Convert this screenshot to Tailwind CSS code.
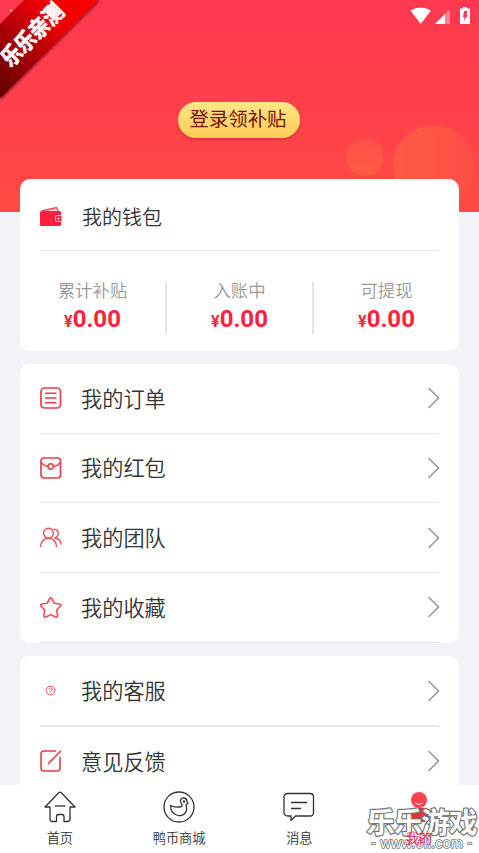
<!DOCTYPE html>
<html lang="zh-CN">
<head>
<meta charset="utf-8">
<title>我的</title>
<script src="https://cdn.jsdelivr.net/npm/@tailwindcss/browser@4"></script>
</head>
<body class="w-[479px] h-[853px] overflow-hidden bg-[#f2f3f8] text-[#333] font-[Roboto,'Noto_Sans_CJK_SC',sans-serif] font-[350]">
<div class="relative w-[479px] h-[853px] overflow-hidden flex flex-col">
  <!-- header background -->
  <div class="absolute inset-x-0 top-0 h-[212px] overflow-hidden bg-linear-to-b from-[#ff3850] via-[#ff404b] to-[#ff4b43]">
    <div class="absolute left-[346px] top-[138px] size-[38px] rounded-full bg-linear-to-b from-[#ff504b] to-[#ff5a44]"></div>
    <div class="absolute left-[393px] top-[125px] size-[81px] rounded-full bg-linear-to-r from-[#ff5947] to-[#ff4e46]"></div>
    <svg class="absolute left-0 top-0" width="110" height="110" viewBox="0 0 110 110">
      <defs>
        <linearGradient id="rib" x1="0" y1="100" x2="100" y2="0" gradientUnits="userSpaceOnUse"><stop offset="0" stop-color="#5c0000"/><stop offset=".3" stop-color="#980005"/><stop offset=".65" stop-color="#e90005"/><stop offset="1" stop-color="#ff0000"/></linearGradient>
        <filter id="sh"><feGaussianBlur stdDeviation="1.5"/></filter>
      </defs>
      <path d="M0 100 L100 0 H92 L0 92Z" fill="#70101c" filter="url(#sh)"/>
      <path d="M0 24 L24 0 H99 L0 98Z" fill="url(#rib)"/>
      <circle cx="11" cy="10.500" r="1" fill="#fff"/>
      <text x="0" y="0" transform="translate(10.500 68) rotate(-45)" textLength="78" lengthAdjust="spacingAndGlyphs" font-family="Noto Sans CJK SC" font-weight="700" font-size="22.500" fill="#fff" stroke="#fff" stroke-width=".8">乐乐亲测</text>
    </svg>
  </div>
  <!-- status bar -->
  <div class="relative h-[30px] shrink-0">
    <svg class="absolute left-[410px] top-[6px]" width="62" height="19" viewBox="0 0 62 19">
      <path d="M.5 4.500Q10.500-1.500 21 4.500L10.700 18Z" fill="#fff"/>
      <path d="M25 18L40 3V18Z" fill="#ff8090"/><path d="M25 18L35 8V18Z" fill="#fff"/>
      <path d="M50 2.500H53V1H57V2.500H60V18H50Z" fill="#fff"/>
      <path d="M54 5H57.500L56.500 9H58L54 15L54.500 11H53Z" fill="#ff3850"/>
    </svg>
  </div>
  <div class="relative h-[149px] shrink-0 pt-[72px] flex justify-center items-start">
    <div class="w-[122px] h-[36px] mr-[1px] rounded-full bg-linear-to-b from-[#ffe685] to-[#fccb56] shadow-[0_2px_3px_#c92e36aa] text-center text-[19.400px] leading-[35px] text-[#780f0b] font-normal"><span class="-ml-[2px]">登录领补贴</span></div>
  </div>
  <!-- wallet -->
  <section class="relative mx-5 h-[171.500px] shrink-0 rounded-[10px] bg-white">
    <div class="mx-5 h-[72px] border-b border-[#e5e5e7] flex items-center pt-[4px]">
      <svg width="23" height="22" viewBox="0 0 23 22"><path d="M2 5L16.500 1.500L18 5" fill="none" stroke="#ff3550" stroke-width="1.400"/><path d="M5 5L14 3L15 5" fill="none" stroke="#ff7080" stroke-width=".8"/><rect y="5" width="21" height="15" rx="1.500" fill="#ff1f3d"/><rect x="15.500" y="9.500" width="6.500" height="6" rx="1.500" fill="#ff1f3d" stroke="#ffc4cc" stroke-width="1.200"/><circle cx="18.500" cy="12.500" r="1" fill="#fff"/></svg>
      <span class="ml-[19px] text-[20px] leading-[30px] pt-[2px]">我的钱包</span>
    </div>
    <div class="mt-[31px] h-[52px] flex text-center">
      <div class="w-[147px] border-r-2 border-[#e6e6e6]"><p class="-mt-[3px] text-[17.400px] leading-[25px] text-[#999]">累计补贴</p><p class="-mt-px text-[24px] leading-[32px] font-bold text-[#ff213c]"><span class="text-[16px]">¥</span>0.00</p></div>
      <div class="w-[147px] border-r-2 border-[#e6e6e6]"><p class="-mt-[3px] text-[17.400px] leading-[25px] text-[#999]">入账中</p><p class="-mt-px text-[24px] leading-[32px] font-bold text-[#ff213c]"><span class="text-[16px]">¥</span>0.00</p></div>
      <div class="w-[145px]"><p class="-mt-[3px] text-[17.400px] leading-[25px] text-[#999]">可提现</p><p class="-mt-px text-[24px] leading-[32px] font-bold text-[#ff213c]"><span class="text-[16px]">¥</span>0.00</p></div>
    </div>
  </section>
  <!-- menu -->
  <section class="mx-5 mt-[13.500px] h-[279px] shrink-0 rounded-[10px] bg-white px-5 text-[21.200px]">
    <div class="h-[69.700px] border-b border-[#e5e5e7] flex items-center">
      <svg width="22" height="22" viewBox="0 0 22 22" fill="none" stroke="#e83d4b" stroke-width="1.700" stroke-linecap="round"><rect x="1" y="1" width="19.500" height="20" rx="3.500"/><path d="M5.500 6.300H16M5.500 11H16M5.500 15.700H16" stroke-width="1.400"/></svg>
      <span class="ml-[19px] flex-1 pt-[3px]">我的订单</span>
      <svg class="-mr-px" width="13" height="22" viewBox="0 0 13 22" fill="none" stroke="#999" stroke-width="1.600"><path d="M1.500 1L11.500 11L1.500 21"/></svg>
    </div>
    <div class="h-[69.700px] border-b border-[#e5e5e7] flex items-center">
      <svg width="22" height="22" viewBox="0 0 22 22" fill="none" stroke="#e83d4b" stroke-width="1.700"><rect x="1" y="1" width="19.500" height="20" rx="3"/><path d="M1 5.500Q4 9 8 9.500M13.500 9.500Q17.500 9 20.500 5.500" stroke-width="1.400"/><circle cx="10.700" cy="9.500" r="2.700" stroke-width="1.500"/></svg>
      <span class="ml-[19px] flex-1 pt-[2px]">我的红包</span>
      <svg class="-mr-px" width="13" height="22" viewBox="0 0 13 22" fill="none" stroke="#999" stroke-width="1.600"><path d="M1.500 1L11.500 11L1.500 21"/></svg>
    </div>
    <div class="h-[69.700px] border-b border-[#e5e5e7] flex items-center">
      <svg width="22" height="22" viewBox="0 0 22 22" fill="none" stroke="#f04a55" stroke-width="1.400"><circle cx="8.500" cy="6.200" r="4.900"/><path d="M.7 20C.7 14.500 4 11.200 8.500 11.200S16.500 14.500 16.500 20M13.500 2.500C16.500 2 18.500 4 18.300 6.500C18.200 9 16.500 10.500 14.500 11C18.500 11.500 21 14 21 17.500"/></svg>
      <span class="ml-[19px] flex-1 pt-[2px]">我的团队</span>
      <svg class="-mr-px" width="13" height="22" viewBox="0 0 13 22" fill="none" stroke="#999" stroke-width="1.600"><path d="M1.500 1L11.500 11L1.500 21"/></svg>
    </div>
    <div class="h-[69.700px] border-b border-[#e5e5e7] flex items-center">
      <svg class="mt-px" width="22" height="22" viewBox="0 0 22 22" fill="none" stroke="#f04a55" stroke-width="1.600" stroke-linejoin="round"><path d="M9.400 1.900Q10.700-.2 12 1.900L14.200 6.300L19.400 7Q21.700 7.600 20.200 9.300L16.700 13L17.500 18.500Q17.500 21 15.300 20L10.700 17.600L6 20Q3.800 20.900 3.900 18.500L4.700 13L1.100 9.300Q-.3 7.600 2 7L7.200 6.300Z"/></svg>
      <span class="ml-[19px] flex-1 pt-[2px]">我的收藏</span>
      <svg class="-mr-px" width="13" height="22" viewBox="0 0 13 22" fill="none" stroke="#999" stroke-width="1.600"><path d="M1.500 1L11.500 11L1.500 21"/></svg>
    </div>
  </section>
  <section class="mx-5 mt-[13px] h-[129px] shrink-0 rounded-t-[10px] bg-white px-5 text-[21.200px] overflow-hidden">
    <div class="h-[70.500px] border-b-2 border-[#e5e5e7] flex items-center pt-px">
      <svg width="22" height="22" viewBox="0 0 22 22" fill="none" stroke="#f04a55" stroke-width="1"><circle cx="10.500" cy="10.500" r="4.400"/><path d="M8.900 9.600C8.900 7.300 12.300 7.400 12.200 9.400C12.100 10.500 10.600 10.500 10.600 12M10.600 12.700V13.500"/></svg>
      <span class="ml-[19px] flex-1 pt-[2px]">我的客服</span>
      <svg class="-mr-px" width="13" height="22" viewBox="0 0 13 22" fill="none" stroke="#999" stroke-width="1.600"><path d="M1.500 1L11.500 11L1.500 21"/></svg>
    </div>
    <div class="h-[69px] flex items-center">
      <svg width="22" height="22" viewBox="0 0 22 22" fill="none" stroke="#e83d4b" stroke-width="1.600"><path d="M16 1H4Q1 1 1 4V18Q1 21 4 21H17Q20 21 20 18V7M8 14L21 .7"/></svg>
      <span class="ml-[19px] flex-1 pt-[3px]">意见反馈</span>
      <svg class="-mr-px" width="13" height="22" viewBox="0 0 13 22" fill="none" stroke="#999" stroke-width="1.600"><path d="M1.500 1L11.500 11L1.500 21"/></svg>
    </div>
  </section>
  <!-- tab bar -->
  <nav class="h-[68px] shrink-0 bg-white grid grid-cols-4 text-[13.200px] leading-[20px] text-center">
    <div class="flex flex-col items-center pt-[6px]">
      <svg width="32" height="32" viewBox="0 0 32 32" fill="none" stroke="#333" stroke-width="1.300" stroke-linejoin="round"><path d="M15 1.500Q16 .7 17 1.500L31 16H26V28Q26 30.500 23.500 30.500H20V26Q20 23.500 18 23.500H14.500Q12.500 23.500 12.500 26V30.500H8Q6 30.500 6 28V16H1Z"/><path d="M11 15H21.500"/></svg>
      <span class="mt-[6px]">首页</span>
    </div>
    <div class="flex flex-col items-center pt-[6px] pr-px">
      <svg width="32" height="32" viewBox="0 0 32 32" fill="none" stroke="#333" stroke-width="1.300" stroke-linejoin="round"><circle cx="16" cy="16" r="15"/><path d="M7.500 14.500Q12 17 18.500 15.500C20.500 14.500 17 12 17.500 9.500C18.500 5.500 24 6.500 24 10.500L25 12L23 13.500C23.500 16 24 17 23.500 19.500C22 24.500 17.500 25.500 13.500 24C9.500 22.500 7.500 18.500 7.500 14.500Z"/><circle cx="21" cy="10.500" r=".6" fill="#333"/></svg>
      <span class="mt-[6px]">鸭币商城</span>
    </div>
    <div class="flex flex-col items-center pt-[6px]">
      <svg width="32" height="32" viewBox="0 0 32 32" fill="none" stroke="#333" stroke-width="1.300" stroke-linejoin="round"><path d="M5 2.500H27Q30.500 2.500 30.500 6V21.500Q30.500 25 27 25H12.500L8 29.500V25H5Q1 25 1 21.500V6Q1 2.500 5 2.500Z"/><path d="M8 11.500H24M8 17.500H18"/></svg>
      <span class="mt-[6px]">消息</span>
    </div>
    <div class="flex flex-col items-center pt-[6px] text-[#ff213c]">
      <svg width="32" height="32" viewBox="0 0 32 32"><path d="M4 21Q10 16 16 17Q24 16 28 20L28 25H25V31H9V25H4Z" fill="#e8303b"/><circle cx="16" cy="9" r="8" fill="#ff4251"/><path d="M12 12Q16 15 20 12" fill="none" stroke="#fff" stroke-width="1"/></svg>
      <span class="mt-[6px] relative z-10">我的</span>
    </div>
  </nav>
  <!-- watermark -->
  <svg class="absolute left-[362px] top-[788px]" width="117" height="65" viewBox="0 0 117 65" stroke-linejoin="round">
    <text x="4.500" y="44.500" textLength="111" font-family="Noto Sans CJK SC" font-weight="700" font-size="28.500" fill="#fff" stroke="#777" stroke-width="2.400" paint-order="stroke">乐乐游戏</text>
    <text x="9" y="60" textLength="101" font-family="Liberation Sans" font-weight="400" font-size="14" fill="#fff" stroke="#777" stroke-width="1.600" paint-order="stroke">- www.6ll.com -</text>
  </svg>
</div>
</body>
</html>
